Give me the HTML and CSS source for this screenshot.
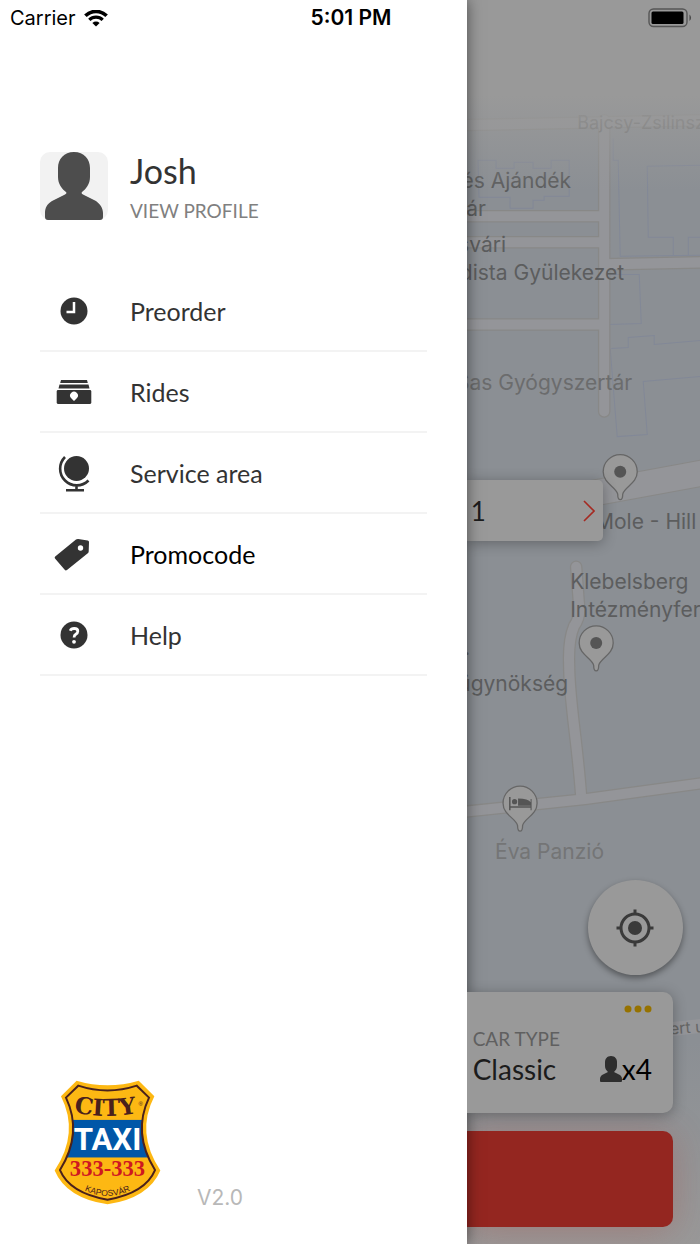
FILE: index.html
```html
<!DOCTYPE html>
<html lang="en">
<head>
  <meta charset="UTF-8" />
  <meta name="viewport" content="width=device-width, initial-scale=1.0"/>
  <title>City Taxi</title>
  <link rel="stylesheet" href="styles.css">
</head>
<body>
<header class="status">
  <div class="carrier">
    <span>Carrier</span>
    <svg width="24" height="17" viewBox="0 0 24 17" aria-hidden="true">
      <path d="M1.400 5.800a15 15 0 0 1 21.200 0" fill="none" stroke="#000" stroke-width="3.600"/>
      <path d="M5.300 9.800a9.500 9.500 0 0 1 13.400 0" fill="none" stroke="#000" stroke-width="3.200"/>
      <path d="M12 16.500l-3.600-3.600a5.200 5.200 0 0 1 7.200 0z"/>
    </svg>
  </div>
  <time class="time">5:01 PM</time>
  <svg class="battery" width="44" height="20" viewBox="0 0 44 20" aria-hidden="true">
    <rect x="1" y="1" width="38" height="17.500" rx="4.500" fill="none" stroke="#555" stroke-width="1.400"/>
    <rect x="3.500" y="3.500" width="32" height="12.500" rx="1.500"/>
    <path d="M41.500 6.500q3 3.200 0 6.500z" fill="#444"/>
  </svg>
</header>

<div class="app">
  <aside class="drawer">
    <a class="profile" href="#">
      <svg class="avatar" viewBox="0 0 68 68" aria-hidden="true">
        <rect width="68" height="68" rx="10" fill="#f2f2f2"/>
        <path d="M34 0C24 0 18 7 18 16v9c0 7 4 12 8 15 1 1 0 2-1 2.500L12 49c-5 3-7 7-7 12v4q0 3 3 3h52q3 0 3-3v-4c0-5-3-9-7-12l-13-6.500c-1-.5-2-1.500-1-2.500 4-3 8-8 8-15v-9C50 7 44 0 34 0z" fill="#4d4d4d"/>
      </svg>
      <span class="who">
        <span class="name">Josh</span>
        <span class="view">VIEW PROFILE</span>
      </span>
    </a>

    <nav class="menu">
      <a href="#">
        <svg class="icon" viewBox="0 0 40 40" aria-hidden="true">
          <circle cx="20" cy="20" r="13.500"/>
          <path d="M20 11v10h-7.500" fill="none" stroke="#fff" stroke-width="2.500"/>
        </svg>
        Preorder
      </a>
      <a href="#">
        <svg class="icon" viewBox="0 0 40 40" aria-hidden="true">
          <path d="M7 8h26l.8 3H6.200zM5.500 12.500h29l1 4h-31zM3.500 18h33l.8 1v12l-1 1H3.700l-1-1V19z"/>
          <path d="M20 29l-3-3a3.900 3.900 0 1 1 6 0z" fill="#fff"/>
        </svg>
        Rides
      </a>
      <a href="#">
        <svg class="icon" viewBox="0 0 40 40" aria-hidden="true">
          <circle cx="22.500" cy="15.500" r="12.500"/>
          <path d="M11 4a16 16 0 0 0 23.500 23.500M22.500 31v6M12 37.200h18" fill="none" stroke="#333" stroke-width="2.600"/>
        </svg>
        Service area
      </a>
      <a class="active" href="#">
        <svg class="icon" viewBox="0 0 40 40" aria-hidden="true">
          <path d="M1.200 22.500L22 5.600q1-.7 2.200-.6l9.500 1.500q1.300.3 1.300 1.500l-.3 9.500q0 1-.9 1.800L13 36q-1.300 1-2.300-.2L1 24.500q-.8-1.200.2-2z"/>
          <circle cx="26.500" cy="14" r="2.700" fill="#fff"/>
        </svg>
        Promocode
      </a>
      <a href="#">
        <svg class="icon" viewBox="0 0 40 40" aria-hidden="true">
          <circle cx="20" cy="20" r="13.500"/>
          <path d="M16.200 15.800q1-2.300 4-2.300 3.600 0 3.600 2.800 0 1.700-2 2.900-1.700 1-1.700 3.300" fill="none" stroke="#fff" stroke-width="2.800"/>
          <circle cx="20" cy="26.800" r="1.900" fill="#fff"/>
        </svg>
        Help
      </a>
    </nav>

    <footer class="brand">
      <svg class="logo" viewBox="45 30 322 376" role="img" aria-label="City Taxi Kaposvár">
        <defs>
          <path id="inner" d="M118 47Q206 76 294 47L331 83Q280 190 349 301Q320 370 206 390Q92 370 63 301Q132 190 81 83Z"/>
          <clipPath id="shield"><use href="#inner"/></clipPath>
          <path id="arc-top" d="M92 124Q206 152 320 124"/>
          <path id="arc-bottom" d="M108 346Q206 412 304 346"/>
        </defs>
        <path d="M113 32Q206 60 300 32L347 79Q290 190 365 302Q330 385 206 404Q82 385 47 302Q122 190 66 79Z" fill="#fdb813"/>
        <rect x="60" y="150" width="292" height="113" fill="#0057a8" clip-path="url(#shield)"/>
        <use href="#inner" fill="none" stroke="#4a211c" stroke-width="6"/>
        <text class="logo-city"><textPath href="#arc-top" startOffset="47%">CITY</textPath></text>
        <text class="logo-reg" x="306" y="107">®</text>
        <text class="logo-taxi" x="206" y="241">TAXI</text>
        <text class="logo-phone" x="206" y="319">333-333</text>
        <text class="logo-town"><textPath href="#arc-bottom" startOffset="50%">KAPOSVÁR</textPath></text>
      </svg>
      <span class="version">V2.0</span>
    </footer>
  </aside>

  <main class="pane">
    <svg class="map" viewBox="467 0 233 1244" preserveAspectRatio="xMinYMin slice" aria-hidden="true">
      <defs>
        <linearGradient id="fade-top" x1="0" y1="0" x2="0" y2="1">
          <stop offset="0.500" stop-color="#999"/>
          <stop offset="1" stop-color="#999" stop-opacity="0"/>
        </linearGradient>
        <linearGradient id="fade-bottom" x1="0" y1="0" x2="0" y2="1">
          <stop offset="0" stop-color="#999" stop-opacity="0"/>
          <stop offset="1" stop-color="#999"/>
        </linearGradient>
        <g id="roads">
          <path d="M460 125L700 120M604 120V411M460 216H604M460 242H604M604 264L700 262M460 324H604"/>
          <path d="M576 566L579 606Q580 617 574 625Q568 639 569 664C569 699 577 739 581 795"/>
          <path d="M460 811L585 798L710 781"/>
        </g>
        <g id="pin">
          <path d="M0 28q-2.500 0-2.500-5.500C-4 15-17 12-17 0a17 17 0 0 1 34 0C17 12 4 15 2.500 22.500Q2.500 28 0 28z" fill="#999" stroke="#666" stroke-width="1.300"/>
        </g>
      </defs>
      <rect x="467" width="240" height="1244" fill="#8b8f94"/>
      <!-- buildings -->
      <g fill="none" stroke="#828897" stroke-width="1">
        <path d="M478 160h18v8h18v-6h19v6h18v-8h18v36h-25v4h-11v8h-23v-11h-31z"/>
        <path d="M613 138v22h5l2 96 80-1M700 165l-53 1 1 71h25v19M700 237h-12v19"/>
        <path d="M607 274h32l2 49-33 1zM611 348l17-1v-10l26-2v9l46-4M610 348l7 88 30-2-4-53 57-5"/>
      </g>
      <use href="#roads" fill="none" stroke="#888887" stroke-width="12.500" stroke-linecap="round"/>
      <path d="M590 493L710 471" stroke="#888887" stroke-width="27"/>
      <use href="#roads" fill="none" stroke="#949599" stroke-width="10" stroke-linecap="round"/>
      <path d="M590 493L710 471" stroke="#949599" stroke-width="25"/>
      <path d="M668 1028L705 1024" stroke="#949599" stroke-width="14"/>

      <g class="place">
        <text class="far" x="577" y="129">Bajcsy-Zsilinsz</text>
        <text class="end" x="571" y="188">és Ajándék</text>
        <text class="end" x="486" y="216">ár</text>
        <text class="end" x="506" y="252">svári</text>
        <text class="end" x="624" y="280">dista Gyülekezet</text>
        <text class="end mid" x="632" y="389">Sas Gyógyszertár</text>
        <text class="end" x="696" y="528">Mole - Hill</text>
        <text x="570" y="588">Klebelsberg</text>
        <text x="570" y="616">Intézményfer</text>
        <text class="end" x="470" y="654">.</text>
        <text class="end" x="568" y="690">ügynökség</text>
        <text class="light" x="495" y="858">Éva Panzió</text>
        <text class="street" x="670" y="1033" transform="rotate(-4 670 1033)">ert u</text>
      </g>

      <use href="#pin" x="620" y="471"/>
      <circle cx="620" cy="471" r="6" fill="#555"/>
      <use href="#pin" x="596" y="642"/>
      <circle cx="596" cy="642" r="6" fill="#555"/>
      <use href="#pin" x="520" y="802"/>
      <path d="M509 796h1.500v9h20v-7h1v11h-1v-2.500h-20v2.500h-1.500zM518 804.500v-7q10 0 13 4v3z" fill="#555"/>
      <circle cx="514.500" cy="800.500" r="2.600" fill="#555"/>

      <rect x="467" width="240" height="190" fill="url(#fade-top)"/>
      <rect x="467" y="1040" width="240" height="204" fill="url(#fade-bottom)"/>
    </svg>

    <button class="pickup" type="button">
      <span>1</span>
      <svg width="12" height="22" viewBox="0 0 12 22" aria-hidden="true">
        <path d="M1 1l10 10L1 21" fill="none" stroke="#a52a22" stroke-width="1.600"/>
      </svg>
    </button>

    <div class="bottom">
      <button class="locate" type="button" aria-label="My location">
        <svg width="38" height="38" viewBox="0 0 38 38" aria-hidden="true">
          <circle cx="19" cy="19" r="7" fill="#3a3a3a"/>
          <circle cx="19" cy="19" r="14" fill="none" stroke="#3a3a3a" stroke-width="3"/>
          <path d="M19 0.500v5M19 32.500v5M0.500 19h5M32.500 19h5" stroke="#3a3a3a" stroke-width="3"/>
        </svg>
      </button>
      <button class="car" type="button">
        <svg class="dots" width="28" height="8" viewBox="0 0 28 8" aria-hidden="true">
          <circle cx="4" cy="4" r="3.500"/><circle cx="14" cy="4" r="3.500"/><circle cx="24" cy="4" r="3.500"/>
        </svg>
        <span class="label">CAR TYPE</span>
        <span class="row">
          <span>Classic</span>
          <span class="seats">
            <svg width="22" height="26" viewBox="0 0 22 26" aria-hidden="true">
              <path d="M11 0C7 0 5 3 5 6v4c0 3 1.500 4.500 3 6l-5 2.500Q0 20 0 23v2q0 1 1 1h20q1 0 1-1v-2q0-3-3-4.500L14 16c1.500-1.500 3-3 3-6V6c0-3-2-6-6-6z" fill="#2e2e2e"/>
            </svg>x4
          </span>
        </span>
      </button>
      <button class="order" type="button" aria-label="Order"></button>
    </div>
  </main>
</div>
</body>
</html>
```
FILE: styles.css
```css
* {
  box-sizing: border-box;
}
body {
  margin: 0;
  font-family: Lato, sans-serif;
  background: #fff;
  color: #333;
}
a {
  color: inherit;
  text-decoration: none;
}
button {
  border: 0;
  padding: 0;
  font: inherit;
  color: inherit;
  text-align: left;
  background: #999;
}
svg {
  display: block;
}

/* status bar lies over the drawer and the map */
.status {
  position: absolute;
  top: 0;
  left: 0;
  right: 0;
  z-index: 2;
  display: grid;
  grid-template-columns: 1fr auto 1fr;
  align-items: center;
  height: 36px;
  padding: 0 8px 0 10px;
  font: 20px/24px Inter, sans-serif;
  color: #000;
}
.carrier {
  display: flex;
  align-items: center;
  gap: 8px;
}
.time {
  font-size: 21px;
  font-weight: 600;
}
.battery {
  justify-self: end;
}

.app {
  display: grid;
  grid-template-columns: 2fr 1fr;
  min-height: 100vh;
}

/* drawer */
.drawer {
  position: relative;
  z-index: 1;
  display: flex;
  flex-direction: column;
  padding: 152px 40px 39px;
  background: #fff;
  box-shadow: 0 0 14px rgba(0,0,0,0.5);
}
.profile {
  display: flex;
  gap: 22px;
}
.avatar {
  width: 68px;
  height: 68px;
}
.who {
  display: flex;
  flex-direction: column;
}
.name {
  font-size: 34px;
  line-height: 38px;
}
.view {
  margin-top: 9px;
  font-size: 19px;
  line-height: 24px;
  color: #808080;
}
.menu {
  margin-top: 48px;
}
.menu a {
  display: flex;
  align-items: center;
  gap: 36px;
  height: 81px;
  padding-left: 14px;
  border-bottom: 2px solid #f3f3f3;
  font-size: 25px;
}
.menu .active {
  color: #000;
}
.icon {
  width: 40px;
  height: 40px;
  fill: #333;
}
.brand {
  display: flex;
  align-items: flex-end;
  gap: 36px;
  margin-top: auto;
  padding-left: 14px;
}
.logo {
  width: 107px;
  height: 125px;
}
.logo text {
  text-anchor: middle;
}
.logo-city {
  font: bold 70px "DejaVu Serif", serif;
  fill: #4a211c;
}
.logo-reg {
  font: 18px "Liberation Sans", sans-serif;
  fill: #4a211c;
}
.logo-taxi {
  font: bold 94px Roboto, sans-serif;
  fill: #fff;
}
.logo-phone {
  font: bold 68px "Liberation Serif", serif;
  fill: #cf1820;
}
.logo-town {
  font: 26px "Liberation Sans", sans-serif;
  fill: #4a211c;
}
.version {
  font: 21px/26px Inter, sans-serif;
  margin-bottom: -6px;
  color: #b8b8b8;
}

/* dimmed map side */
.pane {
  position: relative;
  display: flex;
  flex-direction: column;
  padding: 480px 27px 17px 0;
  overflow: hidden;
}
.map {
  position: absolute;
  top: 0;
  left: 0;
  width: 100%;
  height: 100%;
}
.place {
  font: 21px Inter, sans-serif;
  fill: #5c5d5e;
}
.place .end {
  text-anchor: end;
}
.place .far {
  font-size: 18px;
  fill: #6d6d6d;
}
.place .mid {
  fill: #6b6c6d;
}
.place .light {
  fill: #747576;
}
.place .street {
  font-size: 16px;
  fill: #666;
}
.pickup {
  position: relative;
  display: flex;
  align-items: center;
  justify-content: space-between;
  width: 66%;
  height: 61px;
  padding: 0 8px 0 4px;
  border-radius: 0 5px 5px 0;
  box-shadow: 0 2px 14px rgba(0,0,0,0.3);
  font-size: 26px;
  color: #1c1c1c;
}
.bottom {
  position: relative;
  display: flex;
  flex-direction: column;
  margin-top: auto;
}
.locate {
  display: flex;
  align-items: center;
  justify-content: center;
  align-self: flex-end;
  width: 95px;
  height: 95px;
  margin: 0 -10px 17px 0;
  border-radius: 50%;
  box-shadow: 0 3px 6px rgba(0,0,0,0.4);
}
.car {
  position: relative;
  z-index: 1;
  display: flex;
  flex-direction: column;
  padding: 13px 21px 26px 6px;
  border-radius: 0 10px 10px 0;
  box-shadow: 0 2px 14px rgba(0,0,0,0.3);
}
.dots {
  align-self: flex-end;
  fill: #967200;
}
.label {
  margin-top: 14px;
  font-size: 19px;
  line-height: 24px;
  color: #606060;
}
.row {
  display: flex;
  justify-content: space-between;
  align-self: stretch;
  font-size: 28px;
  line-height: 36px;
  color: #1c1c1c;
}
.seats {
  display: flex;
  align-items: center;
  color: #000;
}
.order {
  height: 96px;
  margin-top: 18px;
  border-radius: 0 10px 10px 0;
  background: #942620;
  box-shadow: 0 4px 36px rgba(170,60,50,0.3);
}
```
